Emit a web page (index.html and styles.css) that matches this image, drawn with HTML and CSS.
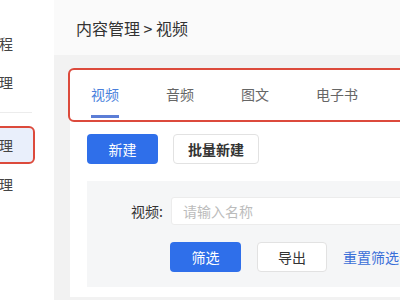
FILE: index.html
```html
<!DOCTYPE html>
<html lang="zh-CN">
  <head>
    <meta charset="UTF-8" />
    <title>内容管理 - 视频</title>
    <link rel="stylesheet" href="styles.css">
  </head>
  <body>
    <aside class="sidebar">
      <div class="side-item">程</div>
      <div class="side-item">理</div>
      <div class="side-divider"></div>
      <div class="side-item active">理</div>
      <div class="side-item">理</div>
    </aside>

    <main class="main">
      <div class="header">
        <span class="crumb">内容管理 &gt; 视频</span>
      </div>

      <section class="card">
        <nav class="tabs">
          <div class="tab active">视频</div>
          <div class="tab">音频</div>
          <div class="tab">图文</div>
          <div class="tab">电子书</div>
        </nav>

        <div class="toolbar">
          <button class="btn primary">新建</button>
          <button class="btn plain bold">批量新建</button>
        </div>

        <div class="filter">
          <div class="form-row">
            <label class="form-label">视频:</label>
            <input class="form-input" type="text" placeholder="请输入名称" />
          </div>
          <div class="form-row actions">
            <button class="btn primary">筛选</button>
            <button class="btn plain">导出</button>
            <a class="link">重置筛选条件</a>
          </div>
        </div>
      </section>
    </main>
  </body>
</html>
```

FILE: styles.css
```css
body {
  margin: 0;
  height: 300px;
  display: flex;
  overflow: hidden;
  font-family: "Noto Sans CJK SC", "Noto Sans", sans-serif;
  font-size: 14px;
  color: #333;
  background: #f2f2f2;
}

/* 侧边栏 */
.sidebar {
  width: 54px;
  flex-shrink: 0;
  background: #fff;
  padding-top: 26px;
  display: flex;
  flex-direction: column;
  gap: 5px;
}

.side-item {
  height: 34px;
  line-height: 34px;
  width: 34px;
  margin-left: -4px;
  padding-left: 3px;
  color: #444;
  border-radius: 4px;
}

.side-item.active {
  background: #e9effb;
  outline: 2px solid #dc4a3c;
}

.side-divider {
  width: 32px;
  height: 1px;
  background: #ececec;
  margin: 8px 0 10px;
}

/* 主区域 */
.main {
  flex: 1;
  display: flex;
  flex-direction: column;
  min-width: 0;
}

.header {
  height: 55px;
  background: #fafafa;
  padding-left: 22px;
  display: flex;
  align-items: center;
}

.crumb {
  font-size: 16px;
  color: #333;
}

.card {
  margin: 15px -300px 0 16px;
  background: #fff;
  padding-bottom: 10px;
}

.tabs {
  height: 50px;
  display: flex;
  gap: 47px;
  padding-left: 21px;
  outline: 2px solid #dc4a3c;
  border-radius: 4px;
}

.tab {
  height: 42px;
  padding-top: 3px;
  display: flex;
  align-items: center;
  color: #666;
  border-bottom: 3px solid transparent;
}

.tab.active {
  color: #4a7fdc;
  border-bottom-color: #5b7dd6;
}

.toolbar {
  display: flex;
  gap: 15px;
  padding: 14px 0 0 17px;
}

.btn {
  flex-shrink: 0;
  font-family: inherit;
  font-size: 14px;
  height: 30px;
  padding: 0;
  border-radius: 4px;
  cursor: pointer;
}

.btn.primary {
  width: 71px;
  background: #2f6fea;
  color: #fff;
  border: none;
}

.btn.plain {
  width: 70px;
  background: #fff;
  color: #333;
  border: 1px solid #e2e2e2;
}

.btn.bold {
  width: 86px;
  font-weight: bold;
}

.filter {
  margin: 17px 0 0 17px;
  background: #f5f6f7;
  padding: 16px 0 15px;
  display: flex;
  flex-direction: column;
  gap: 17px;
}

.form-row {
  display: flex;
  align-items: center;
}

.form-label {
  width: 76px;
  text-align: right;
  margin-right: 8px;
  color: #333;
}

.form-input {
  width: 400px;
  height: 28px;
  box-sizing: border-box;
  border: 1px solid #ececec;
  border-radius: 3px;
  padding: 0 11px;
  font-family: inherit;
  font-size: 14px;
  background: #fff;
}

.form-input::placeholder {
  color: #bcbcbc;
}

.actions {
  padding-left: 83px;
  gap: 16px;
}

.link {
  color: #3a6fd8;
  white-space: nowrap;
}
```
